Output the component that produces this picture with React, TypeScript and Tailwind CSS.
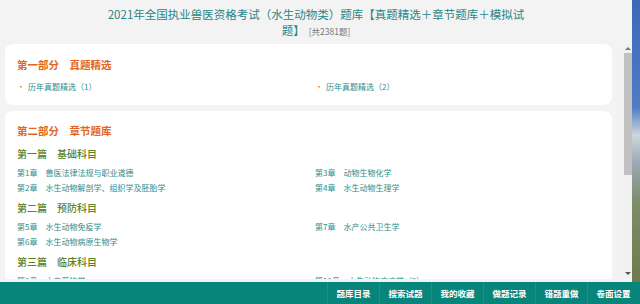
const chapterGroups = [
  {
    title: "第一篇　基础科目",
    rows: [
      [
        ["第1章", "兽医法律法规与职业道德"],
        ["第3章", "动物生物化学"],
      ],
      [
        ["第2章", "水生动物解剖学、组织学及胚胎学"],
        ["第4章", "水生动物生理学"],
      ],
    ],
  },
  {
    title: "第二篇　预防科目",
    rows: [
      [
        ["第5章", "水生动物免疫学"],
        ["第7章", "水产公共卫生学"],
      ],
      [["第6章", "水生动物病原生物学"], null],
    ],
  },
  {
    title: "第三篇　临床科目",
    rows: [
      [
        ["第8章", "水产药物学"],
        ["第10章", "水生动物疾病学（2）"],
      ],
    ],
  },
];

const navItems = ["题库目录", "搜索试题", "我的收藏", "做题记录", "错题重做", "卷面设置"];

const Chapter = ({ item }: { item: string[] | null }) => {
  if (!item) return <div />;
  return (
    <div className="flex h-[15px] items-center text-[8px] leading-[15px] text-[#2e8c8c]">
      <span>{item[0]}</span>
      <span className="ml-[8px]">{item[1]}</span>
    </div>
  );
};

const Scrollbar = () => (
  <div className="flex w-[9px] flex-col items-center bg-[#f1f1f1] mb-[3px]">
    <div className="mt-[3px] h-0 w-0 border-x-[3px] border-b-[3px] border-x-transparent border-b-[#777]" />
    <div className="mt-[3px] h-[122px] w-[8px] bg-[#c1c1c1]" />
    <div className="flex-1" />
    <div className="mb-[4px] h-0 w-0 border-x-[3px] border-t-[3px] border-x-transparent border-t-[#555]" />
  </div>
);

export default function App() {
  return (
    <div
      className="flex h-[304px] w-[640px] flex-col overflow-hidden bg-[#f3f3f3]"
      style={{ fontFamily: '"Noto Sans CJK SC", "Noto Sans", sans-serif' }}
    >
      <div className="flex min-h-0 flex-1">
        <div className="flex w-[632px] flex-col">
          <div className="h-[44px] pt-[6px] text-center text-[11.5px] leading-[16px] text-[#2a8585]">
            2021年全国执业兽医资格考试（水生动物类）题库【真题精选＋章节题库＋模拟试
            <br />
            题】
            <span className="ml-[4px] text-[8.5px] text-[#777]">[共2381题]</span>
          </div>
          <div className="flex min-h-0 flex-1">
            <div className="w-[623px] overflow-hidden pl-[5px] pr-[11px] mb-[3px]">
              <div className="rounded-[8px] bg-white px-[12px] pt-[14px] pb-[11px]">
                <div className="text-[10.5px] font-bold leading-[14px] text-[#e2661f]">
                  第一部分　真题精选
                </div>
                <div className="mt-[8px] grid grid-cols-[298px_1fr] text-[8px] leading-[14px] text-[#2e8c8c]">
                  <div>
                    <span className="text-[#e2661f]">·</span>
                    <span className="ml-[3px]">历年真题精选（1）</span>
                  </div>
                  <div>
                    <span className="text-[#e2661f]">·</span>
                    <span className="ml-[3px]">历年真题精选（2）</span>
                  </div>
                </div>
              </div>
              <div className="mt-[6px] rounded-[8px] bg-white px-[12px] pt-[13px] pb-[12px]">
                <div className="text-[10.5px] font-bold leading-[14px] text-[#e2661f]">
                  第二部分　章节题库
                </div>
                {chapterGroups.map((g, gi) => (
                  <div key={g.title} className={gi === 0 ? "mt-[9px]" : "mt-[6px]"}>
                    <div className="text-[10px] font-medium leading-[14px] text-[#5f7f26]">{g.title}</div>
                    <div className="mt-[4px]">
                      {g.rows.map((row, ri) => (
                        <div key={ri} className="grid grid-cols-[298px_1fr]">
                          <Chapter item={row[0]} />
                          <Chapter item={row[1]} />
                        </div>
                      ))}
                    </div>
                  </div>
                ))}
              </div>
            </div>
            <Scrollbar />
          </div>
        </div>
        <div className="w-[8px] bg-[linear-gradient(to_bottom,#3c68b8_0%,#4f7cc4_38%,#cfd6dc_48%,#9aa8b4_58%,#7d8c6a_72%,#6e7a4c_100%)]" />
      </div>
      <div className="flex h-[22px] justify-end bg-[#07857b]">
        {navItems.map((n) => (
          <div
            key={n}
            className="flex w-[52px] items-center justify-center border-l border-[#1a9187] text-[8.5px] font-bold text-white"
          >
            {n}
          </div>
        ))}
        <div className="w-[1px]" />
      </div>
    </div>
  );
}
